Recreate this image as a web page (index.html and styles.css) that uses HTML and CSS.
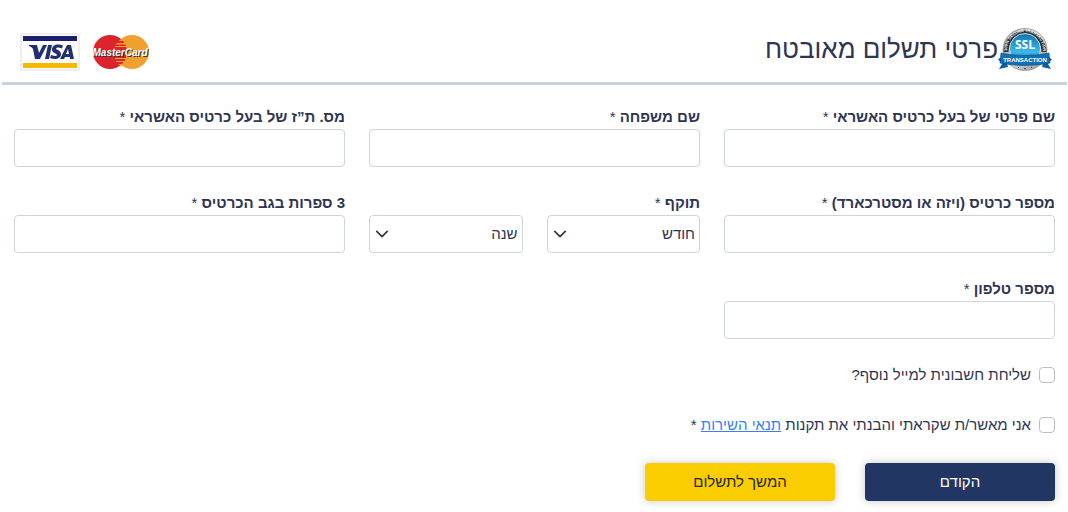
FILE: index.html
```html
<!DOCTYPE html>
<html lang="he" dir="rtl">
<head>
<meta charset="utf-8">
<meta name="viewport" content="width=device-width, initial-scale=1">
<title>פרטי תשלום מאובטח</title>
<link rel="stylesheet" href="styles.css">
</head>
<body>
<main class="payment">
  <header class="payment-header">
    <div class="heading">
      <svg class="ssl" viewBox="0 0 54 44" role="img" aria-label="SSL Transaction">
        <defs>
          <linearGradient id="steel" x1="0" y1="0" x2="1" y2="1">
            <stop offset="0" stop-color="#8a8a8a"/><stop offset=".5" stop-color="#d8d8d8"/><stop offset="1" stop-color="#909090"/>
          </linearGradient>
          <linearGradient id="blue" x1="0" y1="0" x2="0" y2="1">
            <stop offset="0" stop-color="#0a77b5"/><stop offset=".6" stop-color="#3bb9ea"/><stop offset="1" stop-color="#07649f"/>
          </linearGradient>
          <path id="ring" d="M9.500 27A18 18 0 1 1 44.500 27"/>
        </defs>
        <path fill="#0b5fa0" d="M0 32l7-3 3 11-9 2 3-5zM54 32l-7-3-3 11 9 2-3-5z"/>
        <ellipse cx="27" cy="22.500" rx="22" ry="21" fill="url(#steel)" stroke="#777" stroke-width=".6"/>
        <path d="M8 25A19 19 0 0 1 46 25" fill="none" stroke="#303030" stroke-width="5"/>
        <text class="ssl-ring" direction="ltr" text-anchor="middle"><textPath href="#ring" startOffset="50%">100% SECURE TRANSACTION</textPath></text>
        <circle cx="27" cy="22" r="15.500" fill="url(#blue)" stroke="#d5d5d5" stroke-width="1"/>
        <text class="ssl-name" x="27" y="22" text-anchor="middle">SSL</text>
        <path fill="#1170b5" stroke="#064981" stroke-width=".6" d="M3 26q24 5 48 0l1 10q-25 5-50 0z"/>
        <text class="ssl-ribbon" x="27" y="35" text-anchor="middle">TRANSACTION</text>
        <path fill="#444" d="M20 40h1v1h-1zM26 41h2v1h-2zM33 40h1v1h-1z"/>
      </svg>
      <h1 class="title">פרטי תשלום מאובטח</h1>
    </div>
    <div class="cards">
      <svg class="mastercard" viewBox="0 0 58 36" role="img" aria-label="MasterCard">
        <circle cx="40" cy="18" r="17" fill="#f0a02f"/>
        <circle cx="18" cy="18" r="17" fill="#db242c"/>
        <path fill="#f0a02f" d="M29 5l2 2h-4zM25 9h8l1 1.500H24zM23 12h12v1H23zM23 24h12v1H23zM24 27h10v1H24zM26 30h6l-3 2z"/>
        <text class="mc-shadow" x="29" y="23" text-anchor="middle">MasterCard</text>
        <text class="mc-name" x="28" y="22" text-anchor="middle">MasterCard</text>
      </svg>
      <svg class="visa" viewBox="0 0 60 38" role="img" aria-label="Visa">
        <rect x="1" y="1" width="58" height="36" rx="2" fill="#fff" stroke="#dedede"/>
        <path fill="#1c1f70" d="M3 3h54v5H3z"/>
        <path fill="#f7b600" d="M3 30h54v5H3z"/>
        <g fill="#23306f">
          <path d="M9 12h8l2 8 4-8h4l-7 14h-5l-2-10q-1-2-4-3z"/>
          <path d="M28 12h4l-3 14h-4z"/>
          <path d="M43 12.500l-1 3q-5-2-6 0c0 1.500 5 1.500 5 5.500 0 5-6 6-11 4l1-3q6 2 6 0c0-1.500-5-2-5-5.500 0-5 6-6 11-4z"/>
          <path fill-rule="evenodd" d="M47 12h4l3 14h-4v-2h-5l-1 2h-4zM48 16l-2 5h3z"/>
        </g>
      </svg>
    </div>
  </header>

  <form class="form">
    <div class="fields">
      <div class="field">
        <label class="label" for="first">שם פרטי של בעל כרטיס האשראי <span class="star">*</span></label>
        <input class="control" id="first" type="text">
      </div>
      <div class="field">
        <label class="label" for="last">שם משפחה <span class="star">*</span></label>
        <input class="control" id="last" type="text">
      </div>
      <div class="field">
        <label class="label" for="identity">מס. ת”ז של בעל כרטיס האשראי <span class="star">*</span></label>
        <input class="control" id="identity" type="text">
      </div>
      <div class="field">
        <label class="label" for="number">מספר כרטיס (ויזה או מסטרכארד) <span class="star">*</span></label>
        <input class="control" id="number" type="text">
      </div>
      <div class="field">
        <label class="label" for="month">תוקף <span class="star">*</span></label>
        <div class="expiry">
          <div class="select-wrap">
            <select class="control select" id="month"><option>חודש</option></select>
            <svg class="chevron" viewBox="0 0 16 16" aria-hidden="true"><path d="M2 5l6 6 6-6"/></svg>
          </div>
          <div class="select-wrap">
            <select class="control select" id="year" aria-label="שנה"><option>שנה</option></select>
            <svg class="chevron" viewBox="0 0 16 16" aria-hidden="true"><path d="M2 5l6 6 6-6"/></svg>
          </div>
        </div>
      </div>
      <div class="field">
        <label class="label" for="cvv">3 ספרות בגב הכרטיס <span class="star">*</span></label>
        <input class="control" id="cvv" type="text">
      </div>
      <div class="field">
        <label class="label" for="phone">מספר טלפון <span class="star">*</span></label>
        <input class="control" id="phone" type="tel">
      </div>
    </div>
    <div class="checks">
      <div class="check">
        <input class="checkbox" id="invoice" type="checkbox">
        <label for="invoice">שליחת חשבונית למייל נוסף?</label>
      </div>
      <div class="check">
        <input class="checkbox" id="terms" type="checkbox">
        <label for="terms">אני מאשר/ת שקראתי והבנתי את תקנות <a class="link" href="#terms">תנאי השירות</a> *</label>
      </div>
    </div>
    <div class="actions">
      <button class="button button-back" type="button">הקודם</button>
      <button class="button button-next" type="submit">המשך לתשלום</button>
    </div>
  </form>
</main>
</body>
</html>
```
FILE: styles.css
```css
* { box-sizing: border-box; }
body {
  margin: 0;
  background: #fff;
  color: #2e3552;
  font: 15px/24px "Liberation Sans", Arial, sans-serif;
}
.payment { padding: 0 1px 0 2px; }
.payment-header {
  display: flex;
  align-items: flex-end;
  justify-content: space-between;
  padding: 27px 15px 11px 18px;
  border-bottom: 3px solid #c8d1df;
}
.heading { display: flex; align-items: center; }
.ssl { width: 54px; height: 44px; }
.title { margin: 0; font-size: 26px; line-height: 40px; font-weight: 400; }
.ssl-name { font: bold 12px "Open Sans", sans-serif; fill: #fff; }
.ssl-ribbon { font: bold 6px "Liberation Sans", sans-serif; fill: #fff; }
.ssl-ring { font: bold 4px "Liberation Sans", sans-serif; fill: #fff; }
.cards { display: flex; align-items: center; gap: 12px; }
.mastercard { width: 58px; height: 36px; }
.visa { width: 60px; height: 38px; }
.mc-name, .mc-shadow { font: italic bold 10px "Liberation Sans", sans-serif; fill: #fff; }
.mc-shadow { fill: #333; }
.form { padding: 20px 12px 11px 12px; }
.fields { display: grid; grid-template-columns: repeat(3, 1fr); gap: 24px; }
.field { display: flex; flex-direction: column; min-width: 0; }
.label { font-weight: 700; }
.star { font-weight: 400; }
.control {
  width: 100%;
  height: 38px;
  padding: 6px 12px;
  border: 1px solid #ced4da;
  border-radius: 4px;
  background: #fff;
  color: #2e3552;
  font: inherit;
}
.expiry { display: grid; grid-template-columns: 1fr 1fr; gap: 24px; }
.select-wrap { position: relative; }
.select { display: block; padding: 0 4px 0 36px; appearance: none; }
.chevron {
  position: absolute;
  left: 6px;
  top: 12px;
  width: 14px;
  height: 14px;
  fill: none;
  stroke: #343a40;
  stroke-width: 2;
  stroke-linecap: round;
  stroke-linejoin: round;
  pointer-events: none;
}
.checks { display: grid; gap: 26px; padding: 24px 0 26px; }
.check { display: flex; align-items: center; gap: 8px; }
.checkbox {
  width: 16px;
  height: 16px;
  margin: 0;
  border: 1px solid #bfbfbf;
  border-radius: 4px;
  background: #fff;
  appearance: none;
}
.checkbox:checked { background: #213663; }
.link { color: #3580ff; text-decoration: underline; }
.actions { display: flex; flex-wrap: wrap; gap: 30px; }
.button {
  width: 190px;
  height: 38px;
  border: 0;
  border-radius: 4px;
  box-shadow: 0 0 10px rgba(0, 0, 0, .22);
  font: inherit;
  cursor: pointer;
}
.button-back { background: #213663; color: #fff; }
.button-next { background: #facd00; color: #212529; }
```
